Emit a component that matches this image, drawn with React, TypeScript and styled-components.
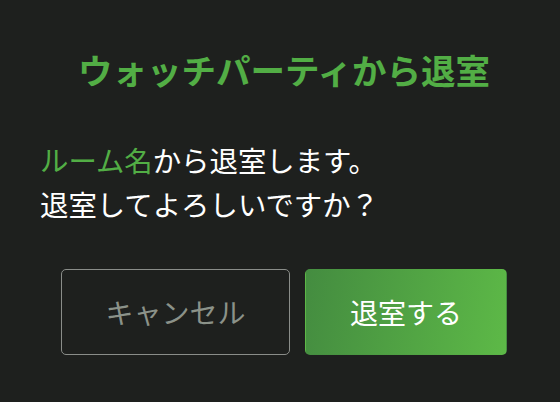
import React from "react";
import styled, { createGlobalStyle } from "styled-components";

const GlobalStyle = createGlobalStyle`
  html, body {
    margin: 0;
    padding: 0;
    background: #1e201e;
  }
  body {
    font-family: "Noto Sans CJK JP", "Noto Sans", sans-serif;
    overflow: hidden;
  }
`;

const Dialog = styled.div`
  width: 560px;
  height: 402px;
  box-sizing: border-box;
  background: #1e201e;
  padding: 52px 32px 0 40px;
  display: flex;
  flex-direction: column;
  align-items: stretch;
`;

const Title = styled.h1`
  margin: 0;
  font-size: 34.5px;
  line-height: 34px;
  font-weight: 700;
  color: #52ae45;
  text-align: center;
`;

const Message = styled.p`
  margin: 52px 0 0;
  font-size: 28.4px;
  line-height: 44px;
  color: #ffffff;
`;

const RoomName = styled.span`
  color: #52ae45;
`;

const Actions = styled.div`
  margin-top: 43px;
  display: flex;
  justify-content: center;
  gap: 15px;
`;

const Button = styled.button<{ $primary?: boolean }>`
  height: 86px;
  padding: 0 ${(p) => (p.$primary ? "44px" : "43.5px")};
  box-sizing: border-box;
  border-radius: 5px;
  font-family: inherit;
  font-size: 28px;
  line-height: 1;
  cursor: pointer;
  border: 1px solid ${(p) => (p.$primary ? "transparent" : "#8a8d89")};
  background: ${(p) =>
    p.$primary ? "linear-gradient(100deg, #448c40 0%, #5db947 100%)" : "transparent"};
  color: ${(p) => (p.$primary ? "#ffffff" : "#8b9289")};
`;

export default function App() {
  return (
    <>
      <GlobalStyle />
      <Dialog>
        <Title>ウォッチパーティから退室</Title>
        <Message>
          <RoomName>ルーム名</RoomName>から退室します。
          <br />
          退室してよろしいですか？
        </Message>
        <Actions>
          <Button>キャンセル</Button>
          <Button $primary>退室する</Button>
        </Actions>
      </Dialog>
    </>
  );
}
